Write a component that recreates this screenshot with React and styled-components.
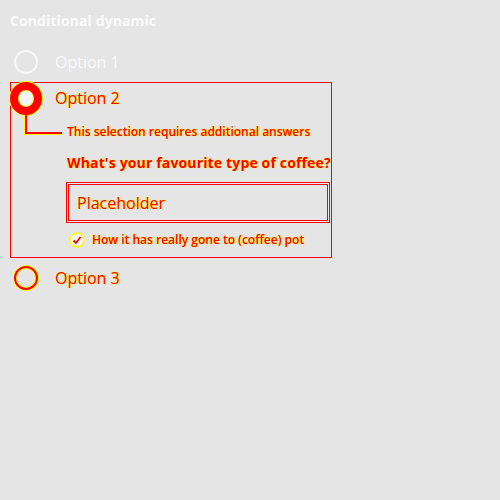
import React from "react";
import styled, { createGlobalStyle } from "styled-components";

const Global = createGlobalStyle`
  body {
    margin: 0;
    background: #e5e5e5;
    font-family: "Open Sans", "Noto Sans", sans-serif;
  }
`;

const RED = "#ff0000";
const YEL = "#ffff00";
const glow = `0 0 1px ${YEL}, 0 0 1px ${YEL}`;

const Page = styled.div`
  width: 500px;
  height: 500px;
  padding: 11px 10px 0;
  box-sizing: border-box;
`;

const Title = styled.div`
  font-size: 14px;
  font-weight: 700;
  line-height: 20px;
  letter-spacing: 0.1px;
  color: #fafafa;
  margin-bottom: 11px;
`;

const Row = styled.div`
  display: flex;
  align-items: center;
  height: ${(p) => (p.$compact ? 32 : 40)}px;
  width: 322px;
`;

const Slot = styled.div`
  width: 32px;
  display: flex;
  justify-content: center;
  align-items: center;
  margin-right: 13px;
`;

const Radio = styled.div`
  width: 24px;
  height: 24px;
  box-sizing: border-box;
  border-radius: 50%;
  border: 2px solid ${(p) => (p.$warn ? RED : "#f7f7f7")};
  box-shadow: ${(p) => (p.$warn ? `0 0 0 1px ${YEL}, inset 0 0 0 1px ${YEL}` : "none")};
`;

const RadioOn = styled.div`
  width: 33px;
  height: 33px;
  box-sizing: border-box;
  border-radius: 50%;
  background: #f4f4f4;
  border: 8px solid ${RED};
  box-shadow: 0 0 0 1px ${YEL}, inset 0 0 0 1px ${YEL};
`;

const Label = styled.span`
  font-size: 16px;
  line-height: 22px;
  color: ${(p) => (p.$warn ? RED : "#fafafa")};
  text-shadow: ${(p) => (p.$warn ? glow : "none")};
`;

const Box = styled.div`
  width: 322px;
  box-sizing: border-box;
  box-shadow: inset 0 0 0 1px ${RED};
  padding-bottom: 10px;
`;

const Details = styled.div`
  display: grid;
  grid-template-columns: 57px 1fr;
`;

const Connector = styled.div`
  margin-left: 15px;
  width: 35px;
  height: 18px;
  border-left: 2px solid ${RED};
  border-bottom: 2px solid ${RED};
  box-shadow: -1px 1px 0 ${YEL};
`;

const Content = styled.div`
  display: flex;
  flex-direction: column;
  padding-right: 1px;
`;

const Note = styled.div`
  margin-top: 10px;
  font-size: 12px;
  font-weight: 600;
  line-height: 16px;
  color: ${RED};
  text-shadow: ${glow};
  white-space: nowrap;
`;

const Question = styled.div`
  margin-top: 13px;
  font-size: 14px;
  font-weight: 700;
  line-height: 20px;
  letter-spacing: 0.15px;
  color: ${RED};
  text-shadow: ${glow};
  white-space: nowrap;
`;

const Field = styled.div`
  margin-top: 9px;
  margin-left: -1px;
  height: 41px;
  width: 264px;
  box-sizing: border-box;
  border: 1px solid ${RED};
  box-shadow: inset 0 0 0 1px #ececec, inset 0 0 0 2px ${RED};
  display: flex;
  align-items: center;
  padding-left: 10px;
  font-size: 16px;
  color: ${RED};
  text-shadow: ${glow};
`;

const Check = styled.label`
  margin-top: 9px;
  display: flex;
  align-items: center;
  gap: 7px;
  margin-left: 2px;
  font-size: 12px;
  font-weight: 600;
  line-height: 16px;
  color: ${RED};
  text-shadow: ${glow};
  white-space: nowrap;
`;

const Tick = () => (
  <svg width="16" height="16" viewBox="0 0 16 16">
    <circle cx="8" cy="8" r="7" fill="#f4f4f4" stroke={YEL} strokeWidth="1.5" />
    <path d="M4.5 8.5 L7 11 L11.5 5" fill="none" stroke={RED} strokeWidth="1.8" />
  </svg>
);

export default function App() {
  return (
    <Page>
      <Global />
      <Title>Conditional dynamic</Title>
      <Row>
        <Slot>
          <Radio />
        </Slot>
        <Label>Option 1</Label>
      </Row>
      <Box>
        <Row $compact>
          <Slot>
            <RadioOn />
          </Slot>
          <Label $warn>Option 2</Label>
        </Row>
        <Details>
          <div>
            <Connector />
          </div>
          <Content>
            <Note>This selection requires additional answers</Note>
            <Question>What's your favourite type of coffee?</Question>
            <Field>Placeholder</Field>
            <Check>
              <Tick />
              How it has really gone to (coffee) pot
            </Check>
          </Content>
        </Details>
      </Box>
      <Row>
        <Slot>
          <Radio $warn />
        </Slot>
        <Label $warn>Option 3</Label>
      </Row>
    </Page>
  );
}
